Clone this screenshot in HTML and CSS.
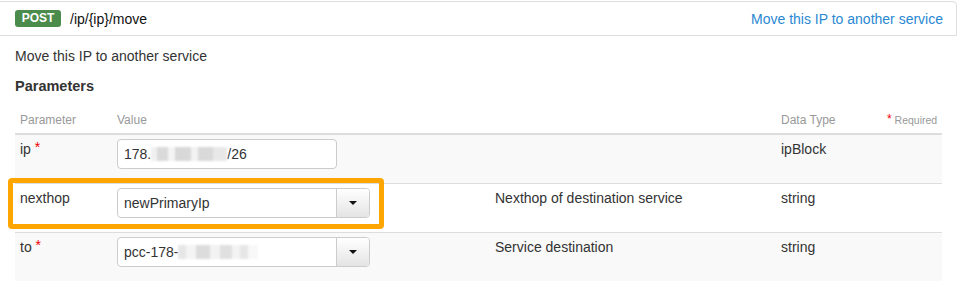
FILE: index.html
```html
<!DOCTYPE html>
<html lang="en">
<head>
<meta charset="utf-8">
<title>POST /ip/{ip}/move</title>
<link rel="stylesheet" href="styles.css">
</head>
<body>
<div class="panel">
  <div class="panel-head">
    <div class="op"><span class="badge">POST</span><span class="path">/ip/{ip}/move</span></div>
    <a class="summary">Move this IP to another service</a>
  </div>
  <div class="panel-body">
    <p class="desc">Move this IP to another service</p>
    <h4 class="params-title">Parameters</h4>
    <div class="params-wrap">
      <table class="params">
        <colgroup>
          <col class="c-param"><col class="c-value"><col class="c-desc"><col class="c-type"><col class="c-req">
        </colgroup>
        <thead>
          <tr><th>Parameter</th><th>Value</th><th></th><th>Data Type</th><th class="th-req"><span class="star small">*</span> Required</th></tr>
        </thead>
        <tbody>
          <tr>
            <td>ip <span class="star">*</span></td>
            <td><div class="field">178.<span class="blur b1"></span>/26</div></td>
            <td></td>
            <td>ipBlock</td>
            <td></td>
          </tr>
          <tr>
            <td>nexthop</td>
            <td><div class="select"><span class="select-value">newPrimaryIp</span><span class="select-btn"><span class="caret"></span></span></div></td>
            <td>Nexthop of destination service</td>
            <td>string</td>
            <td></td>
          </tr>
          <tr>
            <td>to <span class="star">*</span></td>
            <td><div class="select"><span class="select-value">pcc-178-<span class="blur b2"></span></span><span class="select-btn"><span class="caret"></span></span></div></td>
            <td>Service destination</td>
            <td>string</td>
            <td></td>
          </tr>
        </tbody>
      </table>
      <div class="highlight"></div>
    </div>
  </div>
</div>
</body>
</html>
```
FILE: styles.css
```css
body {
  margin: 0;
  font-family: "Liberation Sans", Arial, sans-serif;
  font-size: 14px;
  line-height: 20px;
  color: #333;
  background: #fff;
}

.panel {
  margin: 1px 1px 0 -10px;
}

.panel-head {
  display: flex;
  align-items: center;
  justify-content: space-between;
  height: 33px;
  border: 1px solid #ddd;
  border-radius: 0 4px 0 0;
  padding: 0 13px 0 24px;
}

.op {
  display: flex;
  align-items: center;
}

.badge {
  display: inline-block;
  box-sizing: border-box;
  width: 46px;
  height: 17px;
  line-height: 17px;
  text-align: center;
  background: #4b8b4b;
  color: #fff;
  font-weight: bold;
  font-size: 12px;
  border-radius: 3px;
}

.path {
  margin-left: 9px;
  color: #111;
}

.summary {
  color: #2a88d2;
  text-decoration: none;
}

.panel-body {
  padding: 10px 0 0 25px;
}

.desc {
  margin: 0 0 10px;
}

.params-title {
  margin: 0;
  font-size: 14.5px;
  font-weight: bold;
  line-height: 20px;
  color: #333;
}

.params-wrap {
  position: relative;
  margin-top: 8px;
  width: 927px;
}

.params {
  width: 927px;
  table-layout: fixed;
  border-collapse: separate;
  border-spacing: 0;
}

.c-param { width: 97px; }
.c-value { width: 378px; }
.c-desc { width: 286px; }
.c-type { width: 106px; }
.c-req { width: 60px; }

.params th {
  font-weight: normal;
  font-size: 12px;
  line-height: 16px;
  color: #999;
  text-align: left;
  padding: 8px 5px 5px;
  border-bottom: 2px solid #ddd;
}

.params .th-req {
  text-align: right;
  font-size: 10.5px;
  white-space: nowrap;
}

.params td {
  padding: 4px 5px 14px;
  vertical-align: top;
  border-top: 1px solid #ddd;
}

.params tbody tr:first-child td {
  border-top: none;
}

.params tbody tr:nth-child(odd) td {
  background: #f9f9f9;
}

.star {
  color: #e00;
  line-height: 0;
  vertical-align: 2px;
}

.star.small {
  font-size: 12px;
  vertical-align: 1px;
}

.field {
  box-sizing: border-box;
  width: 220px;
  height: 30px;
  display: flex;
  align-items: center;
  border: 1px solid #ccc;
  border-radius: 4px;
  background: #fff;
  padding: 0 6px;
}

.select {
  box-sizing: border-box;
  width: 253px;
  height: 30px;
  display: flex;
  border: 1px solid #ccc;
  border-radius: 4px;
  background: #fff;
}

.select-value {
  flex: 1;
  display: flex;
  align-items: center;
  padding: 0 6px;
}

.select-btn {
  width: 32px;
  display: flex;
  align-items: center;
  justify-content: center;
  border-left: 1px solid #ccc;
  border-radius: 0 3px 3px 0;
  background: linear-gradient(#ffffff, #e4e4e4);
}

.caret {
  width: 0;
  height: 0;
  border-top: 4px solid #111;
  border-left: 4px solid transparent;
  border-right: 4px solid transparent;
}

.blur {
  display: inline-block;
  height: 14px;
  filter: blur(0.8px);
}

.b1 {
  width: 76px;
  background: linear-gradient(90deg, #f0f0f0 0 8%, #dadada 8% 22%, #f4f4f4 22% 32%, #d8d8d8 32% 52%, #f2f2f2 52% 62%, #d9d9d9 62% 82%, #e8e8e8 82% 100%);
}

.b2 {
  width: 80px;
  background: linear-gradient(90deg, #e6e6e6 0 10%, #f4f4f4 10% 22%, #dcdcdc 22% 40%, #f2f2f2 40% 52%, #e0e0e0 52% 68%, #f3f3f3 68% 78%, #e6e6e6 78% 88%, #f8f8f8 88% 100%);
}

.highlight {
  position: absolute;
  left: -7px;
  top: 74px;
  width: 376px;
  height: 51px;
  box-sizing: border-box;
  border: 5px solid #ffa500;
  border-radius: 4px;
  pointer-events: none;
}
```
